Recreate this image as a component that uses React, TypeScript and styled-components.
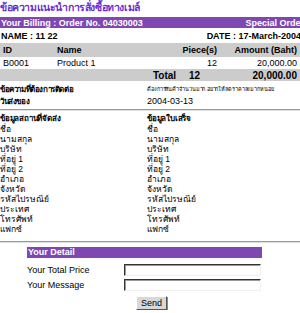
import React from "react";
import styled, { createGlobalStyle } from "styled-components";

const Global = createGlobalStyle`
  html, body { margin: 0; padding: 0; background: #fff; overflow: hidden; }
  body { font-family: "Liberation Sans", Arial, "Noto Sans", sans-serif; font-size: 9px; color: #000; }
`;

const Page = styled.div`
  width: 304px;
  display: flex;
  flex-direction: column;
`;

const Title = styled.div`
  height: 16px;
  line-height: 14px;
  font-size: 10.5px;
  letter-spacing: -0.4px;
  font-weight: bold;
  color: #6b2fd0;
  white-space: nowrap;
`;

const Bar = styled.div`
  height: 11px;
  margin-top: 1px;
  background: #7f47b2;
  color: #fff;
  font-weight: bold;
  display: flex;
  align-items: center;
  justify-content: space-between;
  padding: 0 0 0 1px;
  white-space: nowrap;
`;

const InfoRow = styled.div`
  height: 15px;
  display: flex;
  align-items: center;
  justify-content: space-between;
  font-weight: bold;
  padding: 0 3px 0 1px;
  white-space: nowrap;
`;

const Row = styled.div<{ $shade?: boolean; $h: number; $bold?: boolean }>`
  width: 300px;
  height: ${(p) => p.$h}px;
  display: grid;
  grid-template-columns: 54px 96px 70px 80px;
  align-items: center;
  background: ${(p) => (p.$shade ? "#cccccc" : "#ffffff")};
  font-weight: ${(p) => (p.$bold ? "bold" : "normal")};
  white-space: nowrap;
`;

const TotalRowGrid = styled(Row)`
  grid-template-columns: 150px 36px 18px 96px;
`;

const Cell = styled.div<{ $right?: boolean; $size?: number }>`
  padding: 0 3px;
  text-align: ${(p) => (p.$right ? "right" : "left")};
  font-size: ${(p) => p.$size ?? 9}px;
`;

const MsgSection = styled.div`
  width: 300px;
  display: grid;
  grid-template-columns: 147px 1fr;
  row-gap: 1px;
  margin-top: 3px;
  padding-bottom: 2px;
`;

const MsgLabel = styled.div`
  font-weight: bold;
  font-size: 8px;
  letter-spacing: -0.4px;
  height: 11px;
  line-height: 11px;
  white-space: nowrap;
`;

const MsgValue = styled.div<{ $thai?: boolean }>`
  height: 11px;
  line-height: 11px;
  font-size: ${(p) => (p.$thai ? 5.5 : 9)}px;
  letter-spacing: ${(p) => (p.$thai ? "-0.1px" : "0")};
  white-space: nowrap;
`;

const Rule = styled.div`
  width: 300px;
  height: 0;
  border-top: 1px solid #999;
  border-bottom: 1px solid #e0e0e0;
`;

const AddrSection = styled.div`
  width: 300px;
  display: grid;
  grid-template-columns: 147px 1fr;
  padding: 2px 0 7px;
`;

const AddrCol = styled.div`
  display: flex;
  flex-direction: column;
`;

const AddrHead = styled.div`
  font-weight: bold;
  font-size: 8px;
  letter-spacing: -0.2px;
  height: 11px;
  line-height: 11px;
  white-space: nowrap;
`;

const AddrItem = styled.div`
  height: 10px;
  line-height: 10px;
  font-size: 8.5px;
  white-space: nowrap;
`;

const Form = styled.div`
  margin: 4px 0 0 27px;
  width: 235px;
  display: flex;
  flex-direction: column;
`;

const FormBar = styled.div`
  height: 11px;
  background: #7f47b2;
  color: #fff;
  font-weight: bold;
  line-height: 11px;
  padding-left: 1px;
`;

const FormRow = styled.div<{ $gap: number }>`
  display: grid;
  grid-template-columns: 97px 137px;
  align-items: center;
  margin-top: ${(p) => p.$gap}px;
`;

const Label = styled.div`
  white-space: nowrap;
`;

const Input = styled.input`
  box-sizing: border-box;
  width: 137px;
  height: 12px;
  margin: 0;
  padding: 0;
  border-style: solid;
  border-width: 1px;
  border-color: #333 #f0f0f0 #f0f0f0 #333;
  background: #fff;
  box-shadow: inset 1px 1px 0 #999;
`;

const Send = styled.button`
  box-sizing: border-box;
  margin: 5px 0 0 109px;
  width: 31px;
  height: 14px;
  padding: 0;
  font-family: "Liberation Sans", Arial, sans-serif;
  font-size: 9px;
  color: #000;
  background: #d8d8d8;
  border-style: solid;
  border-width: 1px;
  border-color: #fff #555 #555 #fff;
  box-shadow: 1px 1px 0 #888;
`;

const addrFields = [
  "ชื่อ",
  "นามสกุล",
  "บริษัท",
  "ที่อยู่ 1",
  "ที่อยู่ 2",
  "อำเภอ",
  "จังหวัด",
  "รหัสไปรษณีย์",
  "ประเทศ",
  "โทรศัพท์",
  "แฟกซ์",
];

export default function App() {
  return (
    <>
      <Global />
      <Page>
        <Title>ข้อความแนะนำการสั่งซื้อทางเมล์</Title>
        <Bar>
          <span>Your Billing : Order No. 04030003</span>
          <span>Special Order</span>
        </Bar>
        <InfoRow>
          <span>NAME : 11 22</span>
          <span>DATE : 17-March-2004</span>
        </InfoRow>
        <Row $shade $bold $h={14}>
          <Cell>ID</Cell>
          <Cell>Name</Cell>
          <Cell $right>Piece(s)</Cell>
          <Cell $right>Amount (Baht)</Cell>
        </Row>
        <Row $h={12}>
          <Cell>B0001</Cell>
          <Cell>Product 1</Cell>
          <Cell $right>12</Cell>
          <Cell $right>20,000.00</Cell>
        </Row>
        <TotalRowGrid $shade $bold $h={12}>
          <Cell />
          <Cell $size={10}>Total</Cell>
          <Cell $size={10}>12</Cell>
          <Cell $right $size={10}>20,000.00</Cell>
        </TotalRowGrid>
        <MsgSection>
          <MsgLabel>ข้อความที่ต้องการติดต่อ</MsgLabel>
          <MsgValue $thai>ต้องการสินค้าจำนวนมาก อยากให้ลดราคาลงมากหน่อย</MsgValue>
          <MsgLabel>วันส่งของ</MsgLabel>
          <MsgValue>2004-03-13</MsgValue>
        </MsgSection>
        <Rule />
        <AddrSection>
          <AddrCol>
            <AddrHead>ข้อมูลสถานที่จัดส่ง</AddrHead>
            {addrFields.map((f) => (
              <AddrItem key={f}>{f}</AddrItem>
            ))}
          </AddrCol>
          <AddrCol>
            <AddrHead>ข้อมูลใบเสร็จ</AddrHead>
            {addrFields.map((f) => (
              <AddrItem key={f}>{f}</AddrItem>
            ))}
          </AddrCol>
        </AddrSection>
        <Rule />
        <Form>
          <FormBar>Your Detail</FormBar>
          <FormRow $gap={6}>
            <Label>Your Total Price</Label>
            <Input type="text" />
          </FormRow>
          <FormRow $gap={3}>
            <Label>Your Message</Label>
            <Input type="text" />
          </FormRow>
          <Send type="button">Send</Send>
        </Form>
      </Page>
    </>
  );
}
